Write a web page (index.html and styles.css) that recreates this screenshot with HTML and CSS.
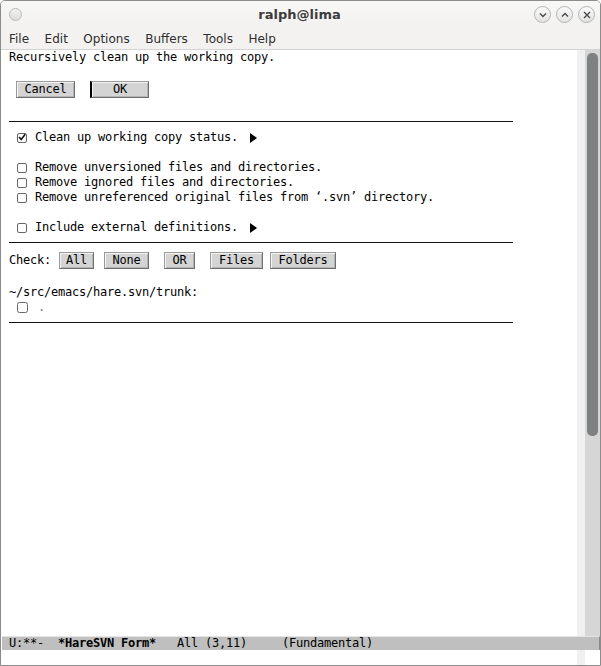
FILE: index.html
```html
<!DOCTYPE html>
<html>
<head>
<meta charset="utf-8">
<link rel="stylesheet" href="styles.css">
</head>
<body>
<div class="window">
  <div class="titlebar">
    <div class="tb-left"><span class="dot"></span></div>
    <div class="title">ralph@lima</div>
    <div class="tb-right">
      <span class="wbtn"><svg width="8" height="6" viewBox="0 0 8 6"><path d="M1 1.5 L4 4.5 L7 1.5" fill="none" stroke="#4a4a4a" stroke-width="1.4"/></svg></span>
      <span class="wbtn"><svg width="8" height="6" viewBox="0 0 8 6"><path d="M1 4.5 L4 1.5 L7 4.5" fill="none" stroke="#4a4a4a" stroke-width="1.4"/></svg></span>
      <span class="wbtn"><svg width="8" height="8" viewBox="0 0 8 8"><path d="M1 1 L7 7 M7 1 L1 7" fill="none" stroke="#4a4a4a" stroke-width="1.4"/></svg></span>
    </div>
  </div>
  <div class="menubar">
    <span>File</span><span>Edit</span><span>Options</span><span>Buffers</span><span>Tools</span><span>Help</span>
  </div>
  <div class="main">
    <div class="buffer">
      <div class="line">Recursively clean up the working copy.</div>
      <div class="line"></div>
      <div class="btnrow">
        <span class="btn w-cancel">Cancel</span>
        <span class="btn w-ok cursor">OK</span>
      </div>
      <div class="line"></div>
      <div class="sep"></div>
      <div class="line opt"><span class="cb"><svg width="10" height="10" viewBox="0 0 10 10"><path d="M2 5 L4.2 7.4 L8.2 2.2" fill="none" stroke="#1a1a1a" stroke-width="1.7"/></svg></span>Clean up working copy status. <span class="tri"></span></div>
      <div class="line"></div>
      <div class="line opt"><span class="cb"></span>Remove unversioned files and directories.</div>
      <div class="line opt"><span class="cb"></span>Remove ignored files and directories.</div>
      <div class="line opt"><span class="cb"></span>Remove unreferenced original files from ‘.svn’ directory.</div>
      <div class="line"></div>
      <div class="line opt"><span class="cb"></span>Include external definitions. <span class="tri"></span></div>
      <div class="sep"></div>
      <div class="btnrow">
        <span class="label">Check:</span>
        <span class="btn w-all">All</span>
        <span class="btn w-none">None</span>
        <span class="btn w-or">OR</span>
        <span class="btn w-files">Files</span>
        <span class="btn w-folders">Folders</span>
      </div>
      <div class="line"></div>
      <div class="line">~/src/emacs/hare.svn/trunk:</div>
      <div class="line opt"><span class="cb cb-file"></span><span class="dotname">.</span></div>
      <div class="sep"></div>
    </div>
    <div class="fringe"></div>
    <div class="scrollbar"><div class="thumb"></div></div>
  </div>
  <div class="modeline">U:**-  <b>*HareSVN Form*</b>   All (3,11)     (Fundamental)</div>
  <div class="minibuffer">
    <div class="mb-text"></div>
    <div class="mb-fringe"></div>
  </div>
</div>
</body>
</html>
```

FILE: styles.css
```css
html, body {
  margin: 0;
  padding: 0;
  background: #ffffff;
}

.window {
  width: 601px;
  height: 666px;
  box-sizing: border-box;
  border: 1px solid #8c8c8c;
  border-radius: 5px 5px 0 0;
  display: flex;
  flex-direction: column;
  overflow: hidden;
  background: #ffffff;
}

.titlebar {
  height: 27px;
  flex: none;
  display: grid;
  grid-template-columns: 1fr auto 1fr;
  align-items: center;
  background: linear-gradient(#f8f8f7, #f2f1f0);
}

.tb-left {
  display: flex;
  align-items: center;
  padding-left: 8px;
}

.dot {
  width: 11px;
  height: 11px;
  border-radius: 50%;
  border: 1px solid #b9b9b9;
  background: linear-gradient(#f2f2f2, #dcdcdc);
}

.title {
  font-family: "DejaVu Sans", sans-serif;
  font-weight: bold;
  font-size: 13px;
  color: #3c3c3c;
  padding-right: 2px;
}

.tb-right {
  display: flex;
  justify-content: flex-end;
  align-items: center;
  gap: 5px;
  padding-right: 5px;
}

.wbtn {
  width: 15px;
  height: 15px;
  border-radius: 50%;
  border: 1px solid #b4b4b4;
  background: linear-gradient(#fbfbfb, #e2e2e2);
  display: flex;
  align-items: center;
  justify-content: center;
}

.menubar {
  height: 21px;
  flex: none;
  border-bottom: 1px solid #d3d3d3;
  background: #f3f2f1;
  display: flex;
  align-items: center;
  gap: 15.5px;
  padding-left: 8px;
  font-family: "DejaVu Sans", sans-serif;
  font-size: 12px;
  color: #2e2e2e;
}

.main {
  height: 586px;
  flex: none;
  display: flex;
}

.buffer {
  width: 576px;
  flex: none;
  box-sizing: border-box;
  padding-left: 8px;
  font-family: "DejaVu Sans Mono", monospace;
  font-size: 12px;
  letter-spacing: -0.2246px;
  color: #000000;
}

.line {
  height: 15px;
  line-height: 15px;
  white-space: pre;
}

.opt {
  display: flex;
  align-items: center;
}

.cb {
  width: 10px;
  height: 10px;
  box-sizing: border-box;
  border: 1px solid #666666;
  border-radius: 2px;
  background: #ffffff;
  margin-left: 8px;
  margin-right: 8px;
  flex: none;
  display: flex;
  align-items: center;
  justify-content: center;
}

.cb svg {
  display: block;
  flex: none;
  margin-top: -1px;
}

.cb-file {
  width: 11px;
  height: 11px;
  border-radius: 2.5px;
  margin-right: 10px;
}

.dotname {
  color: #777777;
}

.tri {
  width: 0;
  height: 0;
  border-top: 5px solid transparent;
  border-bottom: 5px solid transparent;
  border-left: 7px solid #000000;
  margin-left: 5px;
}

.sep {
  width: 504px;
  height: 1px;
  background: #111111;
  margin: 7px 0 8px 0;
}

.btnrow {
  height: 19px;
  display: flex;
  align-items: center;
  white-space: pre;
}

.label {
  line-height: 15px;
  margin-right: 8px;
}

.btn {
  height: 17px;
  box-sizing: border-box;
  display: flex;
  align-items: center;
  justify-content: center;
  line-height: 15px;
  background: #d4d4d4;
  border: 1px solid;
  border-color: #9b9b9b #6f6f6f #6f6f6f #9b9b9b;
  box-shadow: inset 1px 1px 0 #f2f2f2, inset -1px -1px 0 #b4b4b4;
}

.w-cancel { width: 59px; margin-left: 7px; }
.w-ok { width: 59px; margin-left: 15px; }
.cursor { border-left: 2px solid #000000; }
.w-all { width: 35px; }
.w-none { width: 45px; margin-left: 10px; }
.w-or { width: 31px; margin-left: 15px; }
.w-files { width: 53px; margin-left: 15px; }
.w-folders { width: 66px; margin-left: 7px; }

.fringe {
  width: 8px;
  flex: none;
  background: #f0f0f0;
}

.scrollbar {
  width: 15px;
  flex: none;
  background: #d6d6d6;
  box-sizing: border-box;
  padding: 3px 2px 0 2px;
}

.thumb {
  height: 383px;
  border-radius: 5px;
  background: #7d8182;
}

.modeline {
  height: 14px;
  flex: none;
  box-sizing: border-box;
  margin-left: 1px;
  padding-left: 7px;
  background: #bfbfbf;
  border-top: 1px solid #e4e4e4;
  border-right: 1px solid #8a8a8a;
  font-family: "DejaVu Sans Mono", monospace;
  font-size: 12px;
  letter-spacing: -0.2246px;
  line-height: 13px;
  white-space: pre;
  color: #000000;
}

.minibuffer {
  flex: 1;
  display: flex;
}

.mb-text {
  width: 576px;
  flex: none;
}

.mb-fringe {
  width: 8px;
  flex: none;
  background: #f0f0f0;
}
```
